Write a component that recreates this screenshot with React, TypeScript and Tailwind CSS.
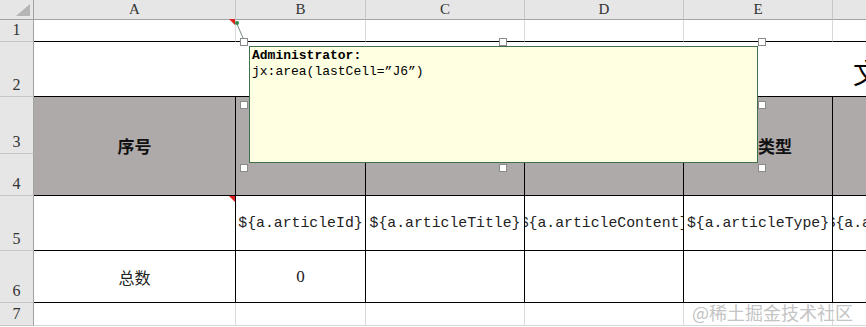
import type { ReactNode } from 'react';

const mono = "font-['Liberation_Mono','Noto_Sans_CJK_SC',monospace]";
const serif = "font-['Liberation_Serif','Noto_Sans_CJK_SC',serif]";
const cjk = "font-['Noto_Sans_CJK_SC',sans-serif]";

const cols = ['A', 'B', 'C', 'D', 'E', 'F'];

function ColHead({ label }: { label: string }) {
  return (
    <div className={`flex items-center justify-center bg-[#e6e6e6] border-r border-r-[#c6c6c6] border-b border-b-[#a3a3a3] text-[15px] text-[#333] ${serif}`}>
      {label}
    </div>
  );
}

function RowHead({ n }: { n: number }) {
  return (
    <div
      className={`flex items-end justify-center pb-[1px] bg-[#e6e6e6] border-r border-r-[#a3a3a3] border-b border-b-[#c6c6c6] text-[16px] leading-none text-[#333] ${serif}`}
    >
      <span className="mb-[2px]">{n}</span>
    </div>
  );
}

function Cell({ children, className = '' }: { children?: ReactNode; className?: string }) {
  return (
    <div className={`flex items-center justify-center overflow-hidden whitespace-nowrap ${className}`}>
      {children}
    </div>
  );
}

function Handle({ x, y }: { x: number; y: number }) {
  return (
    <div
      className="absolute w-[8px] h-[8px] bg-white border border-[#8a8a8a]"
      style={{ left: x - 4, top: y - 4 }}
    />
  );
}

export default function App() {
  const black = 'border-r border-b border-black';
  const light = 'border-r border-b border-[#d9d9d9]';
  const head = `row-span-2 bg-[#aeaaaa] ${black} text-[17px] font-bold text-[#111] ${cjk}`;
  const tpl = `${black} text-[14.8px] text-[#222] ${mono}`;

  return (
    <div className="relative w-[866px] h-[327px] overflow-hidden bg-white">
      <div className="grid grid-cols-[34px_202px_130px_159px_159px_149px_148px] grid-rows-[20px_22px_55px_57px_42px_55px_52px_23px] w-[981px]">
        {/* corner */}
        <div className="relative bg-[#e6e6e6] border-r border-b border-[#a3a3a3]">
          <svg className="absolute left-0 top-0" width="33" height="19">
            <polygon points="30,4 30,16 16,16" fill="#b5b5b5" />
          </svg>
        </div>
        {cols.map((c) => (
          <ColHead key={c} label={c} />
        ))}

        {/* row 1 */}
        <RowHead n={1} />
        {cols.map((c) => (
          <div key={c} className="border-r border-r-[#d9d9d9] border-b border-b-black" />
        ))}

        {/* row 2: merged title */}
        <RowHead n={2} />
        <div className={`col-span-6 flex items-center overflow-hidden whitespace-nowrap border-b border-black pl-[819px] pt-[6px] text-[28px] text-black ${cjk}`}>
          文章信息列表
        </div>

        {/* rows 3-4: header band */}
        <RowHead n={3} />
        <Cell className={head}>序号</Cell>
        <Cell className={head}>文章编号</Cell>
        <Cell className={head}>文章标题</Cell>
        <Cell className={head}>文章内容</Cell>
        <Cell className={head}>文章类型</Cell>
        <Cell className={head}>作者</Cell>
        <RowHead n={4} />

        {/* row 5: template */}
        <RowHead n={5} />
        <Cell className={black} />
        <Cell className={tpl}>{'${a.articleId}'}</Cell>
        <Cell className={tpl}>{'${a.articleTitle}'}</Cell>
        <Cell className={tpl}>{'${a.articleContent}'}</Cell>
        <Cell className={tpl}>{'${a.articleType}'}</Cell>
        <Cell className={tpl}>{'${a.articleAuthor}'}</Cell>

        {/* row 6: total */}
        <RowHead n={6} />
        <Cell className={`${black} text-[16px] text-[#222] ${cjk}`}>总数</Cell>
        <Cell className={`${black} text-[17px] text-[#222] ${serif}`}>0</Cell>
        <Cell className={black} />
        <Cell className={black} />
        <Cell className={black} />
        <Cell className={black} />

        {/* row 7 */}
        <RowHead n={7} />
        {cols.map((c) => (
          <div key={c} className={light} />
        ))}
      </div>

      {/* comment indicators + connector */}
      <svg className="absolute left-0 top-0 pointer-events-none" width="866" height="327">
        <polygon points="229,19 235,19 235,25" fill="#e0201c" />
        <polygon points="229,196 235,196 235,202" fill="#e0201c" />
        <line x1="237" y1="24" x2="243" y2="38" stroke="#7a8a80" strokeWidth="1" />
        <circle cx="237" cy="23" r="2" fill="#2f8a4a" />
      </svg>

      {/* comment box */}
      <div className="absolute left-[249px] top-[46px] w-[509px] h-[117px] bg-[#ffffe1] border border-[#3f6f4f] px-[2px] pt-[1px]">
        <div className={`text-[13px] leading-[15px] font-bold text-black ${mono}`}>Administrator:</div>
        <div className={`text-[13px] leading-[17px] text-black ${mono}`}>jx:area(lastCell=”J6”)</div>
      </div>
      <Handle x={244} y={42} />
      <Handle x={503} y={42} />
      <Handle x={762} y={42} />
      <Handle x={244} y={105} />
      <Handle x={762} y={105} />
      <Handle x={244} y={168} />
      <Handle x={503} y={168} />
      <Handle x={762} y={168} />

      {/* watermark */}
      <div className={`absolute left-[692px] top-[299px] text-[18px] text-[#c4c4c4] ${cjk}`}>
        @稀土掘金技术社区
      </div>
    </div>
  );
}
